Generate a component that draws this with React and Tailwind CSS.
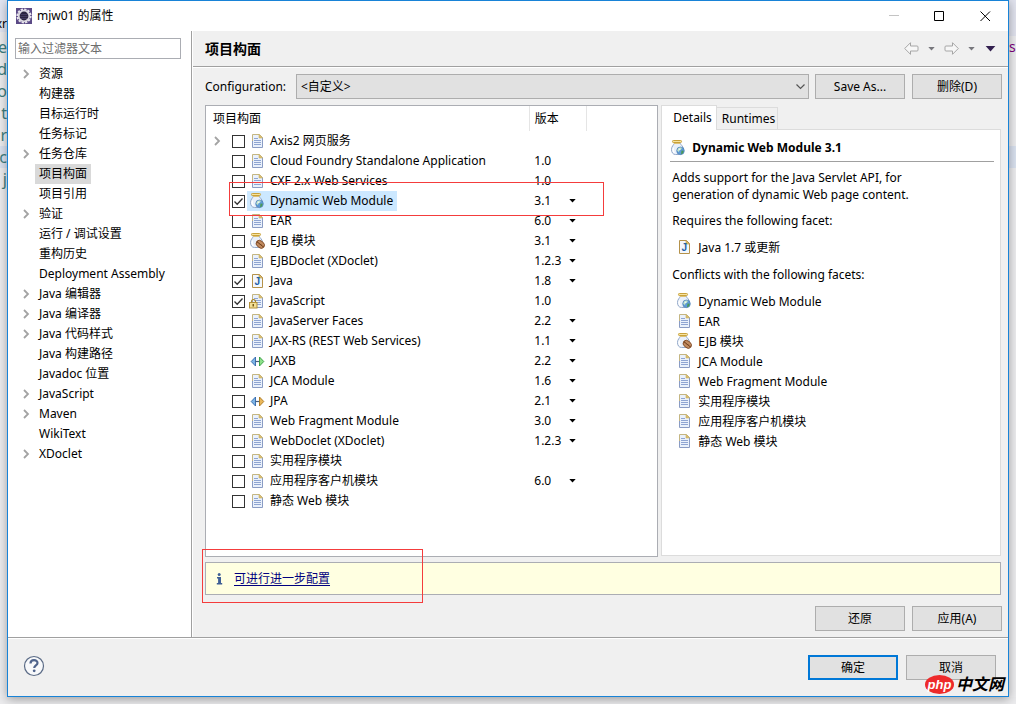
import React, { useState } from 'react';

const TREE = [
    { label: '资源', expandable: true },
    { label: '构建器' },
    { label: '目标运行时' },
    { label: '任务标记' },
    { label: '任务仓库', expandable: true },
    { label: '项目构面' },
    { label: '项目引用' },
    { label: '验证', expandable: true },
    { label: '运行 / 调试设置' },
    { label: '重构历史' },
    { label: 'Deployment Assembly' },
    { label: 'Java 编辑器', expandable: true },
    { label: 'Java 编译器', expandable: true },
    { label: 'Java 代码样式', expandable: true },
    { label: 'Java 构建路径' },
    { label: 'Javadoc 位置' },
    { label: 'JavaScript', expandable: true },
    { label: 'Maven', expandable: true },
    { label: 'WikiText' },
    { label: 'XDoclet', expandable: true },
];

const FACETS = [
    { name: 'Axis2 网页服务', icon: 'doc', expandable: true },
    { name: 'Cloud Foundry Standalone Application', icon: 'doc', version: '1.0' },
    { name: 'CXF 2.x Web Services', icon: 'doc', version: '1.0' },
    { name: 'Dynamic Web Module', icon: 'web', version: '3.1', menu: true, checked: true },
    { name: 'EAR', icon: 'doc', version: '6.0', menu: true },
    { name: 'EJB 模块', icon: 'ejb', version: '3.1', menu: true },
    { name: 'EJBDoclet (XDoclet)', icon: 'doc', version: '1.2.3', menu: true },
    { name: 'Java', icon: 'java', version: '1.8', menu: true, checked: true },
    { name: 'JavaScript', icon: 'locked', version: '1.0', checked: true },
    { name: 'JavaServer Faces', icon: 'doc', version: '2.2', menu: true },
    { name: 'JAX-RS (REST Web Services)', icon: 'doc', version: '1.1', menu: true },
    { name: 'JAXB', icon: 'jaxb', version: '2.2', menu: true },
    { name: 'JCA Module', icon: 'doc', version: '1.6', menu: true },
    { name: 'JPA', icon: 'jpa', version: '2.1', menu: true },
    { name: 'Web Fragment Module', icon: 'doc', version: '3.0', menu: true },
    { name: 'WebDoclet (XDoclet)', icon: 'doc', version: '1.2.3', menu: true },
    { name: '实用程序模块', icon: 'doc' },
    { name: '应用程序客户机模块', icon: 'doc', version: '6.0', menu: true },
    { name: '静态 Web 模块', icon: 'doc' },
];

const CONFLICTS = [
    { name: 'Dynamic Web Module', icon: 'web' },
    { name: 'EAR', icon: 'doc' },
    { name: 'EJB 模块', icon: 'ejb' },
    { name: 'JCA Module', icon: 'doc' },
    { name: 'Web Fragment Module', icon: 'doc' },
    { name: '实用程序模块', icon: 'doc' },
    { name: '应用程序客户机模块', icon: 'doc' },
    { name: '静态 Web 模块', icon: 'doc' },
];

const Page = () => (
    <>
        <path d="M3.5 1.5h7l3 3v10h-10z" fill="#eaf1fb" />
        <path d="M3.5 10V1.5h7l3 3" fill="none" stroke="#c5b682" />
        <path d="M3.5 8v6.5h10v-10" fill="none" stroke="#8a9cc4" />
        <path d="M10 1.5v3.5h3.5z" fill="#dcbf6c" stroke="#c9ae63" strokeWidth="0.6" />
        <path d="M5 5.5h4M5 7.5h7M5 9.5h7M5 11.5h7" stroke="#8fa5d2" />
    </>
);

const Jar = () => (
    <>
        <path d="M4 3.5C4 5 1.5 6 1.5 9.5c0 3 1.5 5 4 5h4c2.5 0 4-2 4-5C13.5 6 10.5 5 10.5 3.5z" fill="#e9f0fa" stroke="#93a8c9" />
        <path d="M3.5 7.5C2.8 9 3 11.5 4.5 13" fill="none" stroke="#fff" strokeWidth="1.2" />
        <rect x="2.5" y="0.5" width="9" height="2" rx="0.8" fill="#f5e3a0" stroke="#c9a13a" />
        <path d="M4 3.5h6" stroke="#dcc27a" />
    </>
);

const FacetIcon = ({ type }) => (
    <svg viewBox="0 0 16 16" className="w-4 h-4 shrink-0" aria-hidden="true">
        {type === 'doc' && <Page />}
        {type === 'web' && (
            <>
                <Jar />
                <circle cx="10.5" cy="10.8" r="3.8" fill="#5f9bd6" stroke="#4d7fb5" strokeWidth="0.7" />
                <path d="M8 8.5c1.5-1.2 3-1 3.8-.6L11 9.5l-1.5.8-.6 1.7-1.7-1.2z" fill="#c4e6c4" />
                <path d="M11.5 10.5l2.3.3-1 2.7-1.8.8z" fill="#4a9a55" />
                <circle cx="9.5" cy="9.3" r="0.9" fill="#e8f6ff" />
            </>
        )}
        {type === 'ejb' && (
            <>
                <Jar />
                <ellipse cx="11.3" cy="11.3" rx="4.6" ry="3.4" transform="rotate(40 11.3 11.3)" fill="#c08a5f" stroke="#7a4520" strokeWidth="0.8" />
                <path d="M8 8.8c1.8.4 1.8 2.2 3.2 2.6s2.2 1.6 3.2 2.6" fill="none" stroke="#5e3010" strokeWidth="1" />
            </>
        )}
        {type === 'java' && (
            <>
                <path d="M3.5 1.5h7l3 3v10h-10z" fill="#f3f7fd" stroke="#b5924a" />
                <path d="M10 1.5v3.5h3.5z" fill="#e3c06a" stroke="#b5924a" strokeWidth="0.6" />
                <text x="5.5" y="12" fontSize="10" fontWeight="700" fontFamily="Liberation Sans, sans-serif" fill="#1f5fa8">J</text>
            </>
        )}
        {type === 'locked' && (
            <>
                <Page />
                <path d="M2.5 10V8.5a2 2 0 0 1 4 0V10" fill="none" stroke="#a8862c" strokeWidth="1.2" />
                <rect x="0.5" y="9.5" width="7.5" height="5.5" fill="#f3df94" stroke="#b3913a" />
                <path d="M4.25 11v2.5" stroke="#6f5310" strokeWidth="1.4" />
            </>
        )}
        {(type === 'jaxb' || type === 'jpa') && (
            <>
                <path d="M6.5 4v9L2.2 8.5z" fill="#7db4e6" stroke="#2f65a8" strokeWidth="0.9" />
                <path d="M6.5 8.5h4" stroke="#47617f" strokeWidth="1.2" />
                <path
                    d="M10.5 4v9l4.3-4.5z"
                    fill={type === 'jaxb' ? '#8ee08a' : '#eab75a'}
                    stroke={type === 'jaxb' ? '#2f9a3c' : '#a8741c'}
                    strokeWidth="0.9"
                />
            </>
        )}
    </svg>
);

const Chevron = () => (
    <svg viewBox="0 0 8 10" className="w-2 h-2.5" fill="none" stroke="#a3a3a3" strokeWidth="1.8" aria-hidden="true">
        <path d="M1 1l4 4-4 4" />
    </svg>
);

const Caret = ({ className }) => (
    <svg viewBox="0 0 8 5" className={className} fill="currentColor" aria-hidden="true">
        <path d="M0 0h8L4 4.5z" />
    </svg>
);

const EclipseLogo = () => (
    <svg viewBox="0 0 16 16" className="w-4 h-4" aria-hidden="true">
        <rect width="16" height="16" fill="#5b4a86" />
        <circle cx="8" cy="8" r="6.6" fill="none" stroke="#e9e6ee" strokeWidth="2" strokeDasharray="2.3 1.15" />
        <circle cx="8" cy="8" r="5.3" fill="#2b2540" stroke="#dcd9e2" strokeWidth="1.8" />
        <path d="M4.500 6.5h7M4.3 8.5h7.4M5 10.5h6" stroke="#4a4368" strokeWidth="0.8" />
    </svg>
);

const HistoryArrow = ({ flip }) => (
    <svg viewBox="0 0 15 13" className={flip ? 'w-[15px] h-[13px] -scale-x-100' : 'w-[15px] h-[13px]'} aria-hidden="true">
        <path d="M.7 6.5L6.5.7v3.3h6.5q1 0 1 1v3q0 1-1 1H6.5v3.3z" fill="#f7f7f7" stroke="#a6a6a6" strokeLinejoin="round" />
    </svg>
);

const PushButton = ({ children, primary }) => (
    <button
        type="button"
        className={`w-[90px] h-[25px] shrink-0 bg-[#e1e1e1] ${primary ? 'border-2 border-[#0078d7]' : 'border border-[#adadad]'}`}
    >
        {children}
    </button>
);

const TitleBar = () => (
    <header className="flex items-center h-[30px] pl-2 bg-white">
        <EclipseLogo />
        <h1 className="ml-[5px] flex-1">mjw01 的属性</h1>
        <button type="button" aria-label="Minimize" className="w-[45px] h-full grid place-items-center text-[#c4c4c4]">
            <svg viewBox="0 0 11 11" className="w-[11px] h-[11px]" stroke="currentColor"><path d="M0 4.5h10" /></svg>
        </button>
        <button type="button" aria-label="Maximize" className="w-[45px] h-full grid place-items-center">
            <svg viewBox="0 0 11 11" className="w-[11px] h-[11px]" fill="none" stroke="#000"><path d="M.5.5h9v9h-9z" /></svg>
        </button>
        <button type="button" aria-label="Close" className="w-[46px] h-full grid place-items-center">
            <svg viewBox="0 0 11 11" className="w-[11px] h-[11px]" fill="none" stroke="#000"><path d="M.5.5l9.5 9.5M10 .5L.5 10" /></svg>
        </button>
    </header>
);

const Sidebar = () => {
    const [selected, setSelected] = useState('项目构面');

    return (
        <nav className="w-[184px] shrink-0 bg-white border-r border-[#a0a0a0] pt-[7px]">
            <input
                type="text"
                aria-label="输入过滤器文本"
                placeholder="输入过滤器文本"
                className="block w-[166px] h-[21px] ml-[7px] px-0.5 border border-[#abadb3] outline-none placeholder:text-[#6d6d6d]"
            />
            <ul className="mt-[5px]">
                {TREE.map((item) => (
                    <li key={item.label} className="flex items-center h-5 pl-[15px]">
                        <span className="w-3">{item.expandable && <Chevron />}</span>
                        <button
                            type="button"
                            onClick={() => setSelected(item.label)}
                            className={`h-5 px-1 whitespace-nowrap ${selected === item.label ? 'bg-[#d9d9d9]' : ''}`}
                        >
                            {item.label}
                        </button>
                    </li>
                ))}
            </ul>
        </nav>
    );
};

const FacetRow = ({ facet, index }) => {
    const [checked, setChecked] = useState(!!facet.checked);
    const id = `facet-${index}`;
    const selected = facet.name === 'Dynamic Web Module';

    return (
        <tr className="h-5">
            <td className="p-0">
                <div className="flex items-center h-5 pl-2">
                    <span className="w-[18px]">{facet.expandable && <Chevron />}</span>
                    <span className="relative grid w-[13px] h-[13px] shrink-0">
                        <input
                            id={id}
                            type="checkbox"
                            checked={checked}
                            onChange={(e) => setChecked(e.target.checked)}
                            className="appearance-none w-[13px] h-[13px] border border-[#333] bg-white"
                        />
                        {checked && (
                            <svg viewBox="0 0 13 13" className="absolute inset-0 pointer-events-none" fill="none" stroke="#333" strokeWidth="1.3">
                                <path d="M2.5 6.5l2.7 2.8L10.5 3.5" />
                            </svg>
                        )}
                    </span>
                    <label
                        htmlFor={id}
                        className={`flex items-center gap-[5px] h-5 ml-0.5 pl-0.5 pr-1 whitespace-nowrap ${selected ? 'bg-[#cce8ff]' : ''}`}
                    >
                        <FacetIcon type={facet.icon} />
                        {facet.name}
                    </label>
                </div>
            </td>
            <td className="p-0 pl-[5px]">
                <div className="flex items-center">
                    <span className="w-[35px]">{facet.version}</span>
                    {facet.menu && (
                        <button type="button" aria-label={`${facet.name} ${facet.version}`}>
                            <Caret className="w-[7px] h-1" />
                        </button>
                    )}
                </div>
            </td>
            <td />
        </tr>
    );
};

const FacetTable = () => (
    <div className="relative flex-[453] min-w-0 bg-white border border-[#abadb3]">
        <table className="w-full table-fixed border-collapse text-left">
            <colgroup>
                <col />
                <col className="w-[57px]" />
                <col className="w-[71px]" />
            </colgroup>
            <thead>
                <tr className="h-[25px]">
                    <th className="p-0 pl-[7px] font-normal border-r border-[#e5e5e5]">项目构面</th>
                    <th className="p-0 pl-[5px] font-normal border-r border-[#e5e5e5]">版本</th>
                    <th />
                </tr>
            </thead>
            <tbody>
                {FACETS.map((facet, i) => (
                    <FacetRow key={facet.name} facet={facet} index={i} />
                ))}
            </tbody>
        </table>
        <div className="absolute left-[23px] top-[76px] w-[375px] h-[34px] border border-[#f43c3c] pointer-events-none" />
    </div>
);

const DetailsPanel = () => (
    <section className="flex-[341] min-w-0 flex flex-col pb-px">
        <div role="tablist" className="flex items-end h-6">
            <button type="button" role="tab" aria-selected="true" className="relative z-10 h-[25px] -mb-px pl-[11px] pr-1 border border-b-0 border-[#dcdcdc] bg-white">
                Details
            </button>
            <button type="button" role="tab" aria-selected="false" className="h-[22px] pl-[5px] pr-[2px] border border-l-0 border-b-0 border-[#dcdcdc]">
                Runtimes
            </button>
        </div>
        <div className="flex-1 px-2 bg-white border border-[#dcdcdc] leading-[17px]">
            <h3 className="flex items-center gap-[6px] h-8 pt-1 mr-[-2px] border-b border-[#a0a0a0] font-bold">
                <FacetIcon type="web" />
                Dynamic Web Module 3.1
            </h3>
            <div className="px-0.5">
                <p className="mt-[7px]">
                    Adds support for the Java Servlet API, for
                    <br />
                    generation of dynamic Web page content.
                </p>
                <p className="mt-[9px]">Requires the following facet:</p>
                <div className="flex items-center gap-[6px] h-5 mt-2 pl-1">
                    <FacetIcon type="java" />
                    Java 1.7 或更新
                </div>
                <p className="mt-[9px]">Conflicts with the following facets:</p>
                <ul className="mt-2 pl-1">
                    {CONFLICTS.map((item) => (
                        <li key={item.name} className="flex items-center gap-[6px] h-5">
                            <FacetIcon type={item.icon} />
                            {item.name}
                        </li>
                    ))}
                </ul>
            </div>
        </div>
    </section>
);

const FacetsPage = () => (
    <main className="flex-1 min-w-0 flex flex-col border-l border-white">
        <div className="flex items-center h-9 pl-3 pr-3 border-b border-[#a0a0a0]">
            <h2 className="flex-1 text-[14px] font-bold">项目构面</h2>
            <div className="flex items-center gap-[9px] text-[#77777c]">
                <button type="button" aria-label="Back"><HistoryArrow /></button>
                <button type="button" aria-label="Back menu"><Caret className="w-[7px] h-1" /></button>
                <button type="button" aria-label="Forward"><HistoryArrow flip /></button>
                <button type="button" aria-label="Forward menu"><Caret className="w-[7px] h-1" /></button>
                <button type="button" aria-label="Menu" className="pl-px text-[#33204f]"><Caret className="w-[11px] h-[6px]" /></button>
            </div>
        </div>

        <div className="flex-1 flex flex-col pl-3 pr-[6px] pt-[6px] pb-[6px] border-t border-white">
            <div className="flex items-center">
                <label htmlFor="configuration" className="w-[91px]">Configuration:</label>
                <div className="relative flex-1">
                    <select id="configuration" className="block appearance-none w-full h-[25px] px-1 border border-[#adadad] bg-[#e1e1e1]">
                        <option>&lt;自定义&gt;</option>
                    </select>
                    <svg viewBox="0 0 9 6" className="absolute right-1 top-[10px] w-[9px] h-[6px] pointer-events-none" fill="none" stroke="#555" strokeWidth="1.2">
                        <path d="M.5.5l4 4 4-4" />
                    </svg>
                </div>
                <div className="flex gap-[7px] ml-[6px]">
                    <PushButton>Save As...</PushButton>
                    <PushButton>删除(D)</PushButton>
                </div>
            </div>

            <div className="flex-1 flex gap-[3px] mt-[6px] mr-px">
                <FacetTable />
                <DetailsPanel />
            </div>

            <div className="relative flex items-center h-[33px] mt-[5px] mr-px pl-[10px] bg-[#ffffe1] border border-[#abadb3]">
                <svg viewBox="0 0 7 12" className="w-[7px] h-3" fill="#3f5f96" aria-hidden="true">
                    <circle cx="3.2" cy="1.5" r="1.5" />
                    <path d="M1 4h4v6h1.2v1.5H.8V10h1.3V5.4H1z" />
                </svg>
                <a href="#configure" className="ml-[11px] text-[#000080] underline underline-offset-2">可进行进一步配置</a>
                <div className="absolute -left-1 -top-[14px] w-[221px] h-[54px] border border-[#f43c3c] pointer-events-none" />
            </div>

            <div className="flex justify-end gap-[7px] mt-[11px]">
                <PushButton>还原</PushButton>
                <PushButton>应用(A)</PushButton>
            </div>
        </div>
    </main>
);

const Watermark = () => (
    <div className="absolute right-1 bottom-[2px] flex items-center gap-0.5 text-black">
        <span className="grid place-items-center w-[29px] h-[19px] rounded-[50%] bg-[#ee2a2a] text-white text-[13px] leading-none italic font-bold font-['Liberation_Sans',sans-serif]">
            php
        </span>
        <span className="text-[16px] leading-5 italic font-bold">中文网</span>
    </div>
);

const EDITOR_CHARS = ['e', 'd', 'o', 't', 'r', 'c', 'j'];

export default function App() {
    return (
        <div className="min-h-screen flex pb-[7px] overflow-hidden bg-[#ececee] text-[12px] leading-4 text-black font-['Noto_Sans','Noto_Sans_CJK_SC',sans-serif]">
            {/* Editor behind the dialog, left edge */}
            <div className="w-[7px] shrink-0 flex flex-col items-end overflow-hidden bg-[#eeeef0]">
                <div className="flex justify-end w-full h-8 pt-4 bg-[#e2e6f3]">xr</div>
                <div className="w-full mt-1 text-[16px] leading-[22px] text-[#3f7f7f]">
                    {EDITOR_CHARS.map((c) => (
                        <div key={c} className={`flex justify-end ${c === 'c' ? 'bg-[#dbe3f1]' : ''}`}>{c}</div>
                    ))}
                </div>
            </div>

            <div className="relative flex-1 min-w-0 flex flex-col border border-[#1883d7] bg-[#f0f0f0] shadow-[0_2px_10px_rgba(0,0,0,0.35)]">
                <TitleBar />
                <div className="flex-1 flex">
                    <Sidebar />
                    <FacetsPage />
                </div>
                <footer className="border-t border-[#a0a0a0]">
                    <div className="flex items-center justify-between h-[58px] pl-[15px] pr-3 border-t border-white">
                        <button type="button" aria-label="Help" className="pb-[3px]">
                            <svg viewBox="0 0 22 22" className="w-[22px] h-[22px]">
                                <circle cx="11" cy="11" r="9.5" fill="#f8f9fb" stroke="#5b6b86" strokeWidth="1.2" />
                                <path d="M7.5 8.5c0-4.5 7-4.3 7-.6 0 2.4-3.3 2.4-3.3 5" fill="none" stroke="#50648c" strokeWidth="2.2" />
                                <circle cx="11.2" cy="15.8" r="1.4" fill="#50648c" />
                            </svg>
                        </button>
                        <div className="flex gap-2">
                            <PushButton primary>确定</PushButton>
                            <PushButton>取消</PushButton>
                        </div>
                    </div>
                </footer>
                <Watermark />
            </div>

            {/* Editor behind the dialog, right edge */}
            <div className="w-[7px] shrink-0 overflow-hidden bg-[#eeeef0]">
                <div className="h-9 bg-[#e2e4ef]" />
                <div className="text-[14px] leading-[22px] text-[#7f007f]">s</div>
                <div className="mt-[88px] h-[22px] bg-[#dbe3f1]" />
            </div>
        </div>
    );
}
